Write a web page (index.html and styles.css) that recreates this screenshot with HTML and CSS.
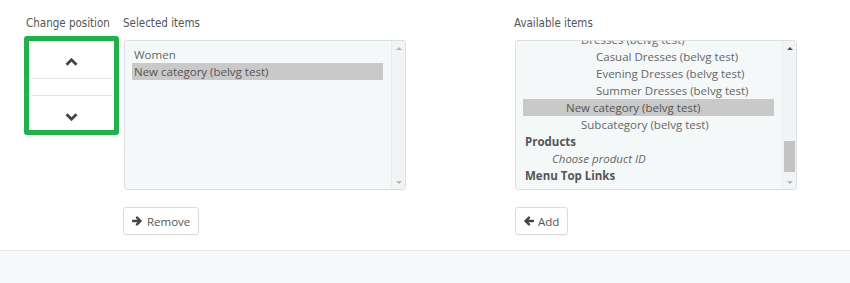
FILE: index.html
```html
<!DOCTYPE html>
<html lang="en">

<head>
  <meta charset="UTF-8">
  <meta name="viewport" content="width=device-width, initial-scale=1.0">
  <title>menu items</title>
  <link rel="stylesheet" href="styles.css">
</head>

<body>
  <div class="panel">
    <div class="col col-pos">
      <div class="label">Change position</div>
      <div class="mover">
        <button class="move move-up">
          <svg width="13" height="8" viewBox="0 0 13 8"><polyline points="1.5,6.8 6.5,1.8 11.5,6.8" fill="none" stroke="#454545" stroke-width="2.8" /></svg>
        </button>
        <div class="move-gap"></div>
        <button class="move move-down">
          <svg width="13" height="8" viewBox="0 0 13 8"><polyline points="1.5,1.2 6.5,6.2 11.5,1.2" fill="none" stroke="#454545" stroke-width="2.8" /></svg>
        </button>
      </div>
    </div>

    <div class="col col-list">
      <div class="label">Selected items</div>
      <div class="listbox">
        <div class="options">
          <div class="list">
            <div class="opt">Women</div>
            <div class="opt sel">New category (belvg test)</div>
          </div>
        </div>
        <div class="scroll">
          <span class="arr up off"></span>
          <span class="track"></span>
          <span class="arr down off"></span>
        </div>
      </div>
      <button class="btn">
        <svg width="10" height="10" viewBox="0 0 10 10"><path d="M1 5H8M5 1.6L8.6 5L5 8.4" fill="none" stroke="#444" stroke-width="2.4" stroke-linecap="round" stroke-linejoin="round" /></svg>
        Remove
      </button>
    </div>

    <div class="col col-list col-avail">
      <div class="label">Available items</div>
      <div class="listbox">
        <div class="options">
          <div class="list scrolled">
            <div class="opt lv3">Dresses (belvg test)</div>
            <div class="opt lv4">Casual Dresses (belvg test)</div>
            <div class="opt lv4">Evening Dresses (belvg test)</div>
            <div class="opt lv4">Summer Dresses (belvg test)</div>
            <div class="opt sel lv2">New category (belvg test)</div>
            <div class="opt lv3">Subcategory (belvg test)</div>
            <div class="opt group">Products</div>
            <div class="opt lv1 hint">Choose product ID</div>
            <div class="opt group">Menu Top Links</div>
          </div>
        </div>
        <div class="scroll">
          <span class="arr up"></span>
          <span class="track"><span class="thumb"></span></span>
          <span class="arr down off"></span>
        </div>
      </div>
      <button class="btn">
        <svg width="10" height="10" viewBox="0 0 10 10"><path d="M9 5H2M5 1.6L1.4 5L5 8.4" fill="none" stroke="#444" stroke-width="2.4" stroke-linecap="round" stroke-linejoin="round" /></svg>
        Add
      </button>
    </div>
  </div>
  <div class="footer"></div>
</body>

</html>
```

FILE: styles.css
```css
body {
  margin: 0;
  background: #fff;
  font-family: "Open Sans", "Liberation Sans", sans-serif;
  color: #666;
}

.panel {
  display: flex;
  align-items: flex-start;
  padding: 13px 0 0 24px;
}

.label {
  height: 20px;
  line-height: 20px;
  padding-left: 2px;
  font-family: "DejaVu Sans Condensed", "DejaVu Sans", sans-serif;
  font-size: 11.5px;
  white-space: nowrap;
  color: #555;
}

.col-pos {
  width: 95px;
  margin-right: 4px;
}

.col-pos .label {
  margin-bottom: 3px;
}

.mover {
  border: 5px solid #21b04b;
  border-radius: 3px;
  background: #fff;
  padding: 0 2px;
}

.move {
  display: flex;
  justify-content: center;
  align-items: flex-end;
  width: 100%;
  border: 0;
  background: #fff;
  padding: 0;
}

.move-up {
  height: 38px;
  padding-bottom: 12px;
  border-bottom: 1px solid #e4e4e4;
}

.move-gap {
  height: 16px;
}

.move-down {
  height: 35px;
  padding-bottom: 9px;
  border-top: 1px solid #e4e4e4;
}

.col-list {
  width: 283px;
}

.col-list .label {
  padding-left: 0;
  margin-bottom: 7px;
}

.col-avail {
  margin-left: 108px;
}

.listbox {
  display: flex;
  width: 282px;
  height: 150px;
  margin-left: 1px;
  box-sizing: border-box;
  border: 1px solid #d9dfe2;
  border-radius: 3px;
  background: #f5f8f9;
}

.options {
  flex: 1;
  overflow: hidden;
  padding: 5px 8px 0 7px;
}

.list.scrolled {
  margin-top: -15px;
}

.opt {
  height: 17px;
  line-height: 17px;
  padding: 0 2px;
  font-size: 11.5px;
  white-space: nowrap;
  color: #666;
}

.opt.sel {
  background: #c9c9c9;
  color: #555;
}

.opt.group {
  font-weight: bold;
  color: #555;
}

.opt.hint {
  font-style: italic;
}

.lv1 {
  text-indent: 27px;
}

.lv2 {
  text-indent: 41px;
}

.lv3 {
  text-indent: 56px;
}

.lv4 {
  text-indent: 71px;
}

.scroll {
  display: flex;
  flex-direction: column;
  width: 13px;
  border-left: 1px solid #e9edef;
  background: #f1f3f4;
}

.arr {
  height: 14px;
  display: flex;
  justify-content: center;
  align-items: center;
}

.arr::before {
  content: "";
  border-left: 3px solid transparent;
  border-right: 3px solid transparent;
}

.arr.up::before {
  border-bottom: 3px solid #505050;
}

.arr.down::before {
  border-top: 3px solid #505050;
}

.arr.off.up::before {
  border-bottom-color: #b5b5b5;
}

.arr.off.down::before {
  border-top-color: #b5b5b5;
}

.track {
  flex: 1;
  display: block;
}

.thumb {
  display: block;
  width: 11px;
  height: 31px;
  margin: 86px 0 0 1px;
  background: #c3c3c3;
}

.btn {
  display: flex;
  align-items: center;
  gap: 5px;
  margin-top: 17px;
  height: 28px;
  padding: 0 8px;
  border: 1px solid #dcdcdc;
  border-radius: 3px;
  background: #fff;
  box-shadow: 0 1px 1px rgba(0, 0, 0, 0.04);
  font-family: "Open Sans", "Liberation Sans", sans-serif;
  font-size: 11.5px;
  color: #555;
}

.col-avail .btn {
  margin-left: 1px;
  gap: 4px;
}

.footer {
  margin-top: 15px;
  height: 40px;
  border-top: 1px solid #e8e8e8;
  background: #f8f9fb;
}
```
